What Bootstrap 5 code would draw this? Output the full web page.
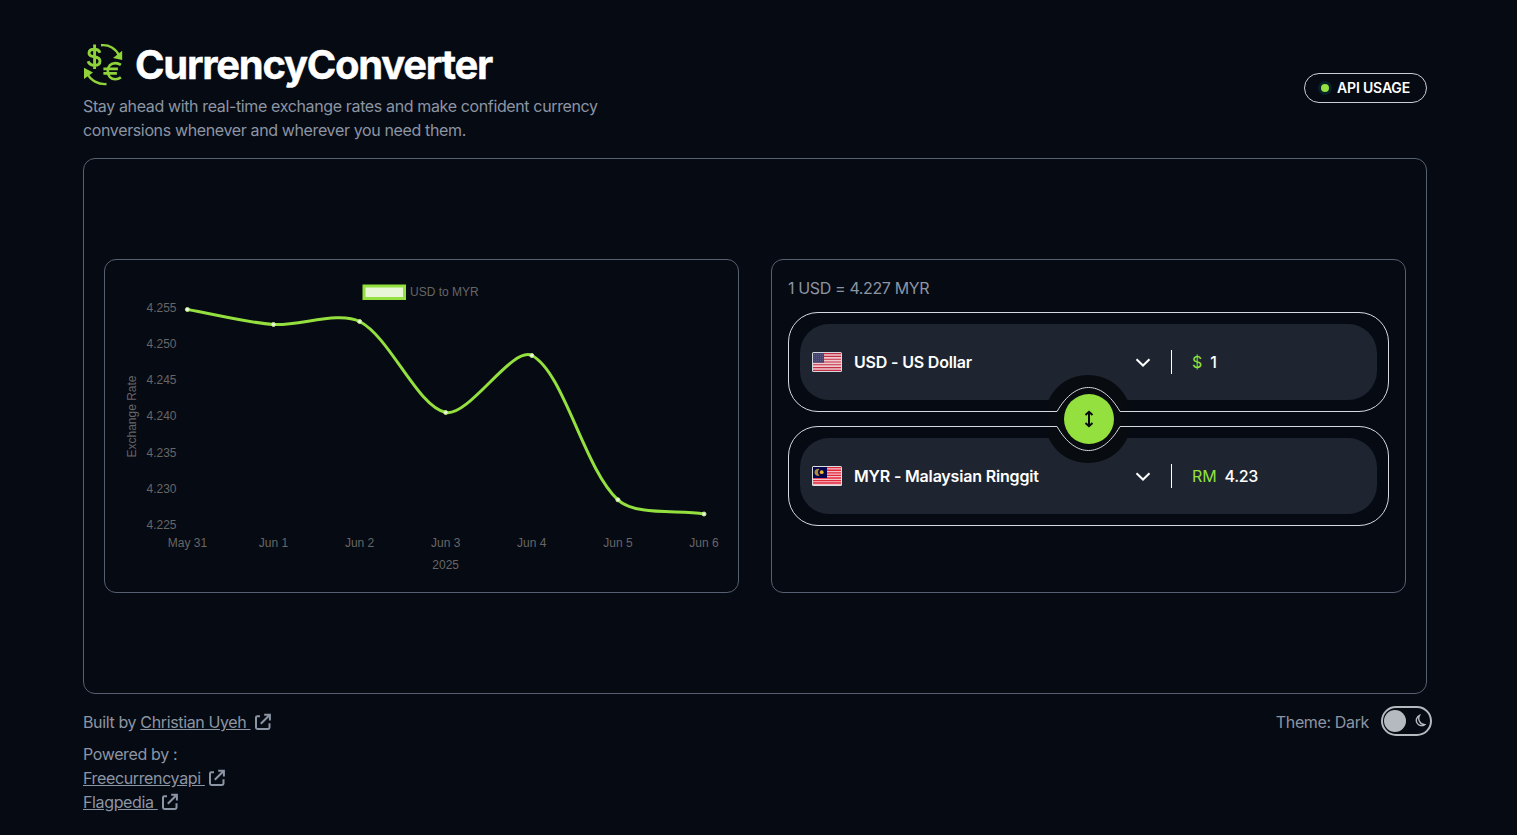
<!DOCTYPE html>
<html lang="en" data-bs-theme="dark">
<head>
<meta charset="utf-8">
<meta name="viewport" content="width=device-width, initial-scale=1">
<title>CurrencyConverter</title>
<link href="https://cdn.jsdelivr.net/npm/bootstrap@5.3.0/dist/css/bootstrap.min.css" rel="stylesheet">
<style>
  body { background: #060a12; color: #8c95a4; font: 400 16px/24px Inter, "Liberation Sans", sans-serif; letter-spacing: -.365px; }
  .shell { width: 1344px; margin-left: 83px; height: 835px; padding-top: 42px; }
  .brand { height: 46px; gap: 12px; }
  .brand h1 { font-size: 40px; line-height: 46px; font-weight: 700; letter-spacing: -1.28px; color: #fff; -webkit-text-stroke: .4px #fff; }
  .tagline { width: 540px; margin-top: 6px; }
  .usage { width: 123px; height: 30px; margin-top: 31px; border: 1px solid #cbd0d8; color: #fff; font-size: 14px; font-weight: 600; letter-spacing: -.17px; }
  .usage .dot { width: 8px; height: 8px; background: #93e03f; box-shadow: 0 0 0 3px #07202a; margin-right: 8px; }
  .panel { height: 536px; margin-top: 16px; padding: 0 20px; gap: 32px; border: 1px solid #566072; border-radius: 12px; }
  .tile { width: 635px; height: 334px; border: 1px solid #566072; border-radius: 12px; }
  .tile-form { padding: 16px; }
  .tick { font: 12px "Liberation Sans", Arial, sans-serif; letter-spacing: 0; fill: #666; }
  .slot { height: 100px; padding: 11px; border: 1px solid #d6dae0; border-radius: 30px; }
  .slot + .slot { margin-top: 14px; }
  .slot-in { height: 76px; padding-left: 12px; background: #1e2530; border-radius: 29px; color: #fff; }
  .cur { width: 281px; margin-left: 12px; font-weight: 600; letter-spacing: -.18px; }
  .rule { width: 1px; height: 24px; background: #fff; margin: 0 20px 0 20px; }
  .sym { color: #93e03f; margin-right: 8px; letter-spacing: -.1px; }
  .swap { position: absolute; left: 50%; top: 50%; transform: translate(-50%, -50%); }
  .foot { margin-top: 16px; }
  .foot a { color: inherit; text-decoration: underline; }
  .foot svg.ext { vertical-align: -3px; margin-left: 3px; }
  .toggle { width: 51px; height: 30px; border: 2px solid #b4babf; border-radius: 15px; margin: -4px -5px 0 12px; padding-left: 1px; padding-right: 4px; }
  .knob { width: 22px; height: 22px; background: #b4babf; }
</style>
</head>
<body class="overflow-hidden">
<svg class="d-none">
  <symbol id="ext" viewBox="0 0 18 18"><path d="M6 3.2H3.4Q2 3.2 2 4.6V14.6Q2 16 3.4 16H14.1Q15.5 16 15.5 14.6V10.2M6.8 10.8L15.6 2M10.2 1.8H15.9V7.4" fill="none" stroke="currentColor" stroke-width="2"/></symbol>
</svg>
<div class="shell">
  <header class="d-flex justify-content-between align-items-start">
    <div>
      <div class="brand d-flex align-items-center">
        <svg width="40" height="44" viewBox="0 0 40 44" fill="none" stroke="#8fd23a" stroke-width="2.4">
          <path d="M18 2.3C26 1.400 33 5.500 36.2 12.8"/><path d="M39.200 7.700V17L30 15Z" fill="#8fd23a" stroke="none"/>
          <path d="M23.500 41C15.500 41.700 7.500 37.500 4 30.3"/><path d="M1 24.800V36L10 29.500Z" fill="#8fd23a" stroke="none"/>
          <path d="M17 9.700C16 7.200 14 6.300 11.500 6.300C8.200 6.300 6 7.700 6 10.200C6 15.600 17 11.900 17 18C17 20.800 15 22.300 11.700 22.300C8.500 22.300 6 21 5.100 18.200M11.600 1.500V26" stroke-width="2.900"/>
          <path transform="translate(1.400 -.3)" d="M36.500 22.200C34.500 20.800 33 20.400 31 20.400C26.500 20.400 23.400 23.500 23.400 28.400C23.400 33.300 26.500 36.500 31 36.500C33 36.500 34.700 36 36.500 34.700M19 26.200H33.500M19 30.700H32.500" stroke-width="2.600"/>
        </svg>
        <h1 class="m-0">CurrencyConverter</h1>
      </div>
      <p class="tagline mb-0">Stay ahead with real-time exchange rates and make confident currency conversions whenever and wherever you need them.</p>
    </div>
    <div class="usage rounded-pill d-flex align-items-center justify-content-center"><span class="dot rounded-circle"></span><span>API USAGE</span></div>
  </header>

  <main class="panel d-flex align-items-center">
    <section class="tile">
      <svg id="chart" class="d-block" width="633" height="332" viewBox="105 260 633 332">
        <rect x="364" y="286" width="40.500" height="12.500" fill="#e9f7d8" stroke="#93e03f" stroke-width="3"/>
        <text class="tick" x="410" y="296">USD to MYR</text>
        <text class="tick" text-anchor="middle" transform="translate(136 416.500) rotate(-90)">Exchange Rate</text>
        <text class="tick" text-anchor="middle" x="445.700" y="569">2025</text>
      </svg>
    </section>
    <section class="tile tile-form">
      <div class="rate mb-2 pb-1">1 USD = 4.227 MYR</div>
      <div class="position-relative">
        <div class="slot">
          <div class="slot-in d-flex align-items-center">
            <svg width="30" height="20" viewBox="0 0 30 20"><rect width="30" height="20" rx="1.500" fill="#d3d6db"/><rect x="1" y="1" width="28" height="18" fill="#f0c9cf"/><path d="M1 1.700H29M1 4.470H29M1 7.240H29M1 10H29M1 12.770H29M1 15.540H29M1 18.300H29" stroke="#c22f45" stroke-width="1.200"/><rect x="1" y="1" width="11" height="9.700" fill="#45436f"/><path d="M2 2.500H12M2 4.500H12M2 6.500H12M2 8.500H12" stroke="#66648c" stroke-width=".8" stroke-dasharray="1 1"/></svg>
            <span class="cur">USD - US Dollar</span>
            <svg width="16" height="10" viewBox="0 0 16 10"><path d="M1.500 2.300L8 8.500L14.500 2.300" fill="none" stroke="#fff" stroke-width="2"/></svg>
            <span class="rule"></span><span class="sym">$</span><span class="amt fw-medium">1</span>
          </div>
        </div>
        <div class="slot">
          <div class="slot-in d-flex align-items-center">
            <svg width="30" height="20" viewBox="0 0 30 20"><rect width="30" height="20" rx="1.500" fill="#dcdfe2"/><rect x="1" y="1" width="28" height="18" fill="#f3c3c8"/><path d="M1 1.700H29M1 4.270H29M1 6.840H29M1 9.410H29M1 11.980H29M1 14.550H29M1 17H29" stroke="#e3283c" stroke-width="1.300"/><rect x="1" y="1" width="14" height="11" fill="#06064f"/><path d="M7.500 3A3.600 3.600 0 1 0 7.500 9.600A4.200 4.200 0 0 1 7.500 3Z" fill="#b08c38"/><circle cx="9.700" cy="6.200" r="1.900" fill="#edb62f"/></svg>
            <span class="cur">MYR - Malaysian Ringgit</span>
            <svg width="16" height="10" viewBox="0 0 16 10"><path d="M1.500 2.300L8 8.500L14.500 2.300" fill="none" stroke="#fff" stroke-width="2"/></svg>
            <span class="rule"></span><span class="sym">RM</span><span class="amt fw-medium">4.23</span>
          </div>
        </div>
        <svg class="swap" width="89" height="90" viewBox="1044 374 89 90" role="button">
          <path d="M1048 400C1056 384 1070 375 1087.500 375S1119 384 1127 400V438C1119 454 1105 463 1087.500 463S1056 454 1048 438Z" fill="#080b0f"/>
          <path d="M1044 411.500H1056.500C1066 395 1077 387.500 1088 387.500S1110 395 1119.500 411.500H1133M1044 426.500H1056.500C1066 443 1077 450.500 1088 450.500S1110 443 1119.500 426.500H1133" fill="none" stroke="#d6dae0"/>
          <circle cx="1088.500" cy="419" r="25" fill="#93e03f"/>
          <path d="M1088.500 412.500V425.500M1085 415L1088.500 411.800L1092 415M1085 423L1088.500 426.200L1092 423" fill="none" stroke="#080b0f" stroke-width="2"/>
        </svg>
      </div>
    </section>
  </main>

  <footer class="foot d-flex justify-content-between align-items-start">
    <div>
      <div class="mb-2">Built by <a href="#">Christian Uyeh&nbsp;</a><svg class="ext" width="18" height="18"><use href="#ext"/></svg></div>
      <div>Powered by :</div>
      <div><a href="#">Freecurrencyapi&nbsp;</a><svg class="ext" width="18" height="18"><use href="#ext"/></svg></div>
      <div><a href="#">Flagpedia&nbsp;</a><svg class="ext" width="18" height="18"><use href="#ext"/></svg></div>
    </div>
    <div class="d-flex">
      <span>Theme: Dark</span>
      <div class="toggle d-flex align-items-center justify-content-between">
        <span class="knob rounded-circle"></span>
        <svg width="12" height="14" viewBox="0 0 12 14"><path d="M5.500 1.500A5.300 5.300 0 1 0 10.800 10.600A6.200 6.200 0 0 1 5.500 1.500Z" fill="none" stroke="#b4babf" stroke-width="1.400"/></svg>
      </div>
    </div>
  </footer>
</div>
<script src="https://cdn.jsdelivr.net/npm/bootstrap@5.3.0/dist/js/bootstrap.bundle.min.js"></script>
<script>
  // Line chart: axis labels and a tension-smoothed curve through the daily rates
  const chart = document.getElementById('chart');
  const add = (tag, attrs, text) => {
    const el = document.createElementNS('http://www.w3.org/2000/svg', tag);
    for (const k in attrs) el.setAttribute(k, attrs[k]);
    if (text) el.textContent = text;
    chart.append(el);
  };
  const days = ['May 31', 'Jun 1', 'Jun 2', 'Jun 3', 'Jun 4', 'Jun 5', 'Jun 6'];
  const ys = [309.5, 324.5, 321.5, 412.5, 355.5, 499.8, 514];
  const pts = ys.map((y, i) => [187.4 + i * 86.1, y]);
  days.forEach((d, i) => {
    add('text', { class: 'tick', x: pts[i][0], y: 547, 'text-anchor': 'middle' }, d);
    add('text', { class: 'tick', x: 176.5, y: 312 + i * 36.15, 'text-anchor': 'end' }, (4.255 - i * 0.005).toFixed(3));
  });
  const tension = 0.3;
  const ctrl = pts.map((p, i) => {
    const a = pts[i - 1] || p, b = pts[i + 1] || p;
    const d1 = Math.hypot(p[0] - a[0], p[1] - a[1]), d2 = Math.hypot(b[0] - p[0], b[1] - p[1]);
    const f1 = tension * d1 / (d1 + d2), f2 = tension * d2 / (d1 + d2);
    return [[p[0] - f1 * (b[0] - a[0]), p[1] - f1 * (b[1] - a[1])], [p[0] + f2 * (b[0] - a[0]), p[1] + f2 * (b[1] - a[1])]];
  });
  let d = 'M' + pts[0];
  for (let i = 1; i < pts.length; i++) d += ' C' + ctrl[i - 1][1] + ' ' + ctrl[i][0] + ' ' + pts[i];
  add('path', { d, fill: 'none', stroke: '#93e03f', 'stroke-width': 3 });
  pts.forEach(p => add('circle', { cx: p[0], cy: p[1], r: 2, fill: '#f1fae6', stroke: '#b9ec83', 'stroke-width': 1 }));
</script>
</body>
</html>
